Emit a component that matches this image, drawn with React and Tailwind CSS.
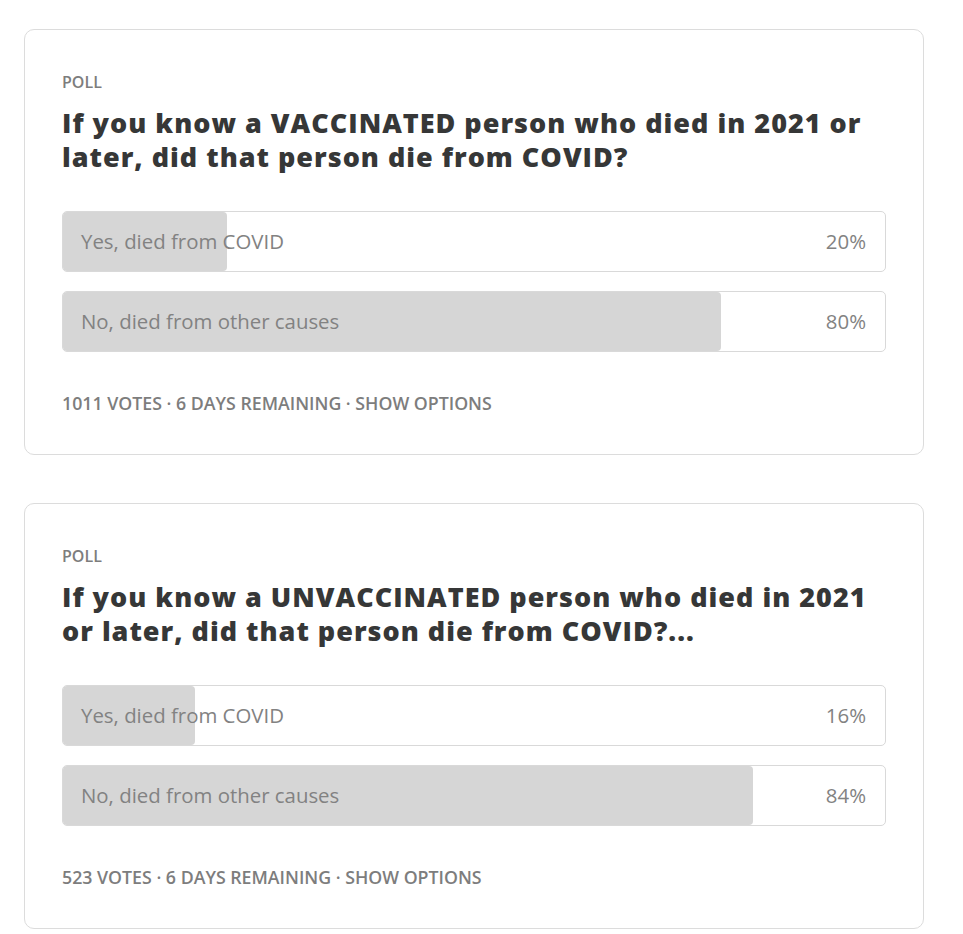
import React from "react";

const polls = [
  {
    title: "If you know a VACCINATED person who died in 2021 or later, did that person die from COVID?",
    options: [
      { label: "Yes, died from COVID", pct: 20 },
      { label: "No, died from other causes", pct: 80 },
    ],
    votes: 1011,
  },
  {
    title: "If you know a UNVACCINATED person who died in 2021 or later, did that person die from COVID?...",
    options: [
      { label: "Yes, died from COVID", pct: 16 },
      { label: "No, died from other causes", pct: 84 },
    ],
    votes: 523,
  },
];

function Poll({ poll }) {
  return (
    <div className="rounded-[10px] border border-[#dcdcdc] bg-white px-[37px] pt-[42px] pb-[41px]">
      <div className="text-[16px] font-semibold leading-[20px] text-[#7d7d7d]">POLL</div>
      <h2 className="mt-[14px] text-[27px] font-extrabold leading-[34px] tracking-[1px] text-[#363737]">
        {poll.title}
      </h2>
      <div className="mt-[37px] flex flex-col gap-[19px]">
        {poll.options.map((o) => (
          <div
            key={o.label}
            className="relative flex h-[61px] items-center justify-between rounded-[5px] border border-[#d9d9d9] bg-white pl-[18px] pr-[19px] text-[20.4px] text-[#828282]"
          >
            <div
              className="absolute left-0 top-0 bottom-0 rounded-[4px] bg-[#d6d6d6]"
              style={{ width: `${o.pct}%` }}
            />
            <span className="relative">{o.label}</span>
            <span className="relative">{o.pct}%</span>
          </div>
        ))}
      </div>
      <div className="mt-[41px] text-[17.75px] font-semibold leading-[20px] text-[#7d7d7d]">
        {poll.votes} VOTES · 6 DAYS REMAINING · SHOW OPTIONS
      </div>
    </div>
  );
}

export default function App() {
  return (
    <div
      className="min-h-screen bg-white pl-[24px] pr-[39px] pt-[29px]"
      style={{ fontFamily: '"Open Sans", "Noto Sans", sans-serif' }}
    >
      <div className="flex flex-col gap-[48px]">
        {polls.map((p, i) => (
          <Poll key={i} poll={p} />
        ))}
      </div>
    </div>
  );
}
